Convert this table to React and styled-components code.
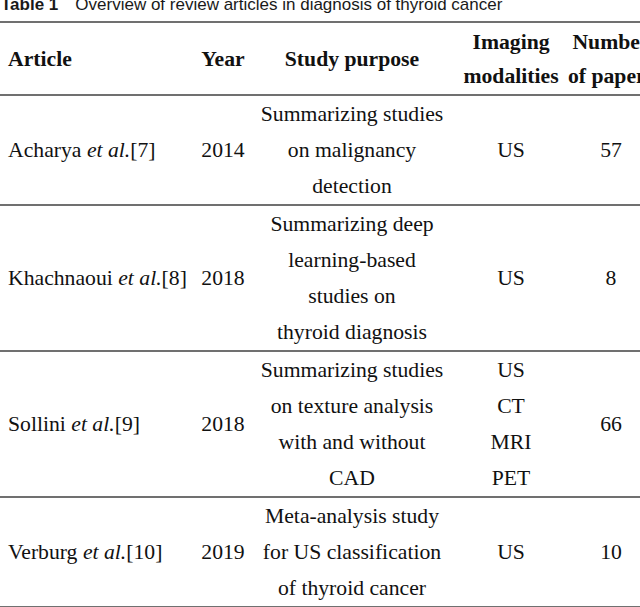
import React from 'react';
import styled, { createGlobalStyle } from 'styled-components';

const COLUMNS = '197px 52px 206px 112px 88px';

const GlobalStyle = createGlobalStyle`
  html, body {
    margin: 0;
    padding: 0;
    background: #fff;
    overflow: hidden;
  }
`;

const Page = styled.div`
  width: 640px;
  height: 607px;
  overflow: hidden;
  background: #fff;
`;

const Caption = styled.div`
  margin-top: -5px;
  height: 20px;
  line-height: 20px;
  font-family: "Liberation Sans", Arial, sans-serif;
  font-size: 17px;
  color: #1a1a1a;
  white-space: nowrap;
  padding-left: 1px;
`;

const CaptionLabel = styled.span`
  font-weight: bold;
  margin-right: 17px;
`;

const Table = styled.div`
  margin-top: 6px;
  width: 655px;
  border-top: 2px solid #707070;
  font-family: "Liberation Serif", "Times New Roman", serif;
  font-size: 21.7px;
  color: #111;
`;

const Row = styled.div`
  display: grid;
  grid-template-columns: ${COLUMNS};
  align-items: center;
  border-bottom: 2px solid #707070;
  line-height: ${p => (p.$head ? '34px' : '36px')};
  padding: ${p => (p.$head ? '2px 0 1px' : '0')};
  font-weight: ${p => (p.$head ? 'bold' : 'normal')};
`;

const Cell = styled.div`
  text-align: ${p => (p.$left ? 'left' : 'center')};
  padding-left: ${p => (p.$left ? '8px' : '0')};
  white-space: nowrap;
`;

const rows = [
  {
    author: 'Acharya',
    ref: '[7]',
    year: '2014',
    purpose: ['Summarizing studies', 'on malignancy', 'detection'],
    modalities: ['US'],
    papers: '57',
  },
  {
    author: 'Khachnaoui',
    ref: '[8]',
    year: '2018',
    purpose: ['Summarizing deep', 'learning-based', 'studies on', 'thyroid diagnosis'],
    modalities: ['US'],
    papers: '8',
  },
  {
    author: 'Sollini',
    ref: '[9]',
    year: '2018',
    purpose: ['Summarizing studies', 'on texture analysis', 'with and without', 'CAD'],
    modalities: ['US', 'CT', 'MRI', 'PET'],
    papers: '66',
  },
  {
    author: 'Verburg',
    ref: '[10]',
    year: '2019',
    purpose: ['Meta-analysis study', 'for US classification', 'of thyroid cancer'],
    modalities: ['US'],
    papers: '10',
  },
];

const Lines = ({ items }) => items.map((t, i) => <div key={ i }>{ t }</div>);

export default function App() {
  return (
    <Page>
      <GlobalStyle />
      <Caption>
        <CaptionLabel>Table 1</CaptionLabel>
        Overview of review articles in diagnosis of thyroid cancer
      </Caption>
      <Table>
        <Row $head>
          <Cell $left>Article</Cell>
          <Cell>Year</Cell>
          <Cell>Study purpose</Cell>
          <Cell>
            <div>Imaging</div>
            <div>modalities</div>
          </Cell>
          <Cell>
            <div>Number</div>
            <div>of papers</div>
          </Cell>
        </Row>
        { rows.map(r => (
          <Row key={ r.author }>
            <Cell $left>
              { r.author } <i>et al.</i>{ r.ref }
            </Cell>
            <Cell>{ r.year }</Cell>
            <Cell>
              <Lines items={ r.purpose } />
            </Cell>
            <Cell>
              <Lines items={ r.modalities } />
            </Cell>
            <Cell>{ r.papers }</Cell>
          </Row>
        )) }
      </Table>
    </Page>
  );
}
